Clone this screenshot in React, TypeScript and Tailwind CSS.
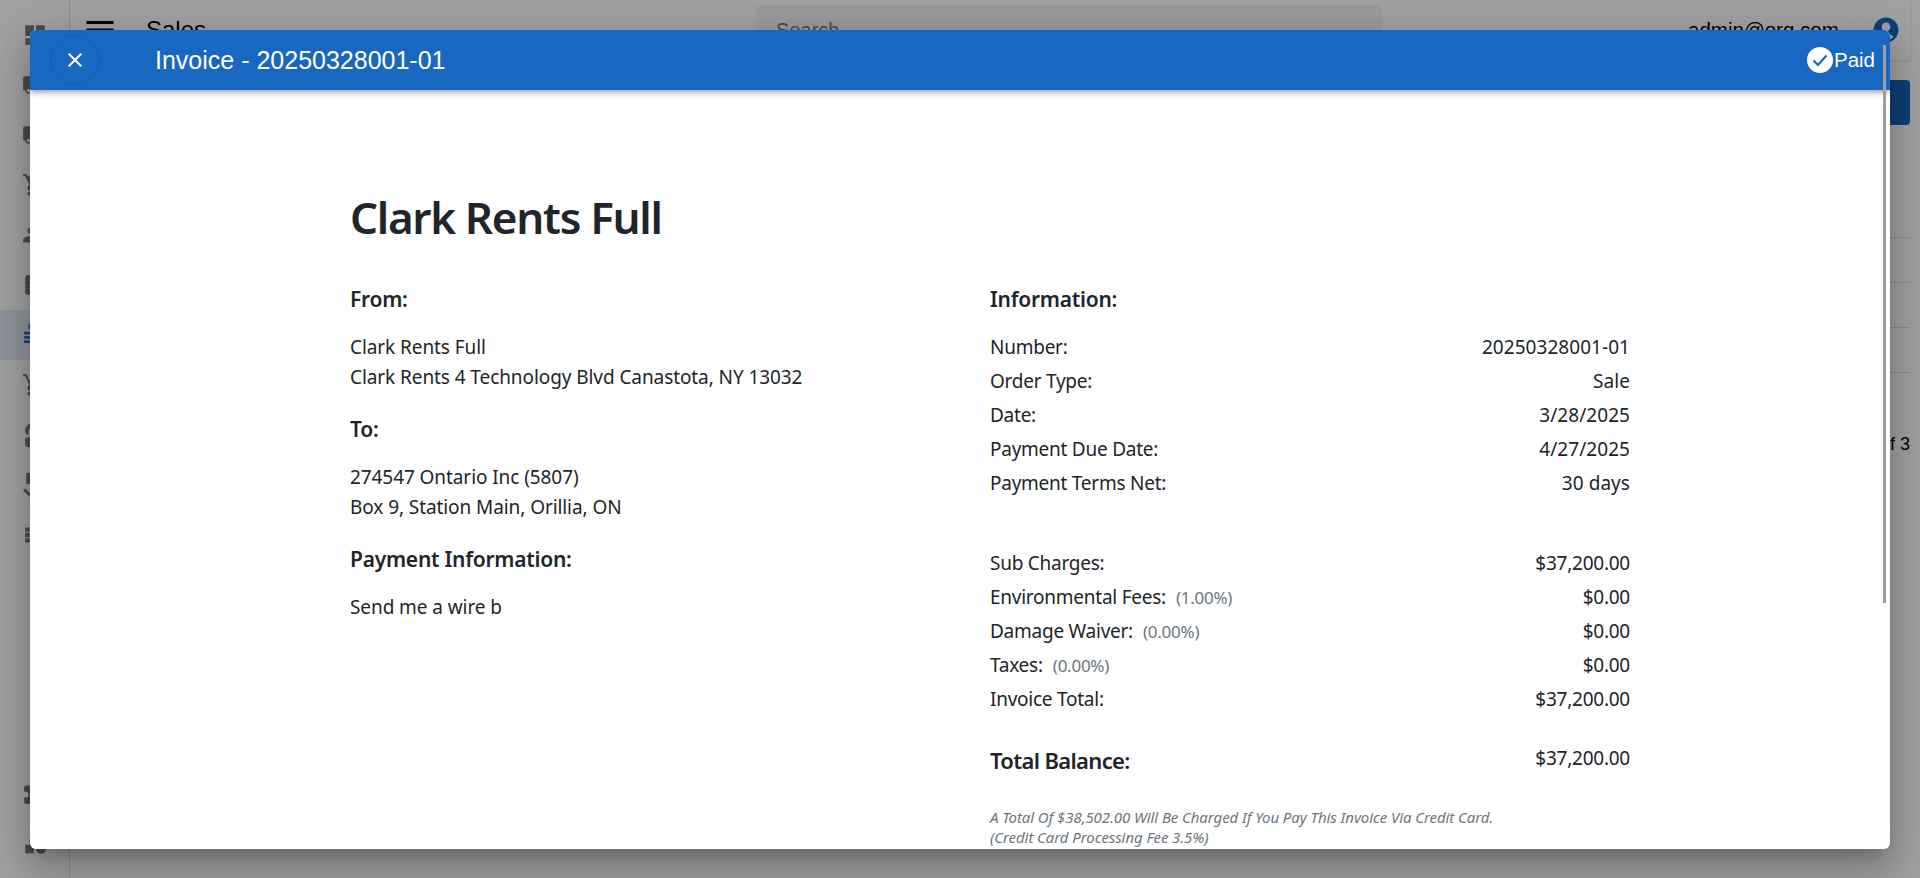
import {
  MdDashboard,
  MdLocalShipping,
  MdShoppingCart,
  MdGroup,
  MdAssignment,
  MdAddShoppingCart,
  MdViewList,
  MdExtension,
  MdCategory,
  MdAccountCircle,
  MdMenu,
  MdClose,
} from 'react-icons/md'

function OrdersIcon({ size }: { size: number }) {
  return (
    <svg viewBox="0 0 24 24" width={size} height={size} fill="currentColor">
      <rect x="6" y="1" width="12" height="6" rx="2" />
      <rect x="2" y="9" width="20" height="2.4" />
      <rect x="2" y="13" width="20" height="2.4" />
      <rect x="2" y="17" width="20" height="2.4" />
    </svg>
  )
}

function RingBoxIcon({ size }: { size: number }) {
  return (
    <svg viewBox="0 0 24 24" width={size} height={size} fill="currentColor">
      <path d="M12 1c-5 0-9 2.5-9 6s1 5 3 5.500V9c0-2 3-4 6-4s6 2 6 4v3.500c2-.5 3-2 3-5.500s-4-6-9-6z" />
      <rect x="3" y="14" width="18" height="9" rx="2" />
    </svg>
  )
}

function TaskIcon({ size }: { size: number }) {
  return (
    <svg viewBox="0 0 24 24" width={size} height={size}>
      <path fill="currentColor" fillRule="evenodd" d="M4 1h16v10H4zM9 4v4h2V4z" />
      <path fill="none" stroke="currentColor" strokeWidth="2.6" d="M2 16l5 5 8-8" />
    </svg>
  )
}

const sideTop = [
  { id: 'dash', icon: MdDashboard },
  { id: 'ship1', icon: MdLocalShipping },
  { id: 'ship2', icon: MdLocalShipping },
  { id: 'cart1', icon: MdShoppingCart },
  { id: 'group', icon: MdGroup },
  { id: 'assign', icon: MdAssignment },
  { id: 'sales', icon: OrdersIcon, active: true },
  { id: 'cart2', icon: MdAddShoppingCart },
  { id: 'ring', icon: RingBoxIcon },
  { id: 'task', icon: TaskIcon },
  { id: 'list', icon: MdViewList },
]

const information = [
  ['Number:', '20250328001-01'],
  ['Order Type:', 'Sale'],
  ['Date:', '3/28/2025'],
  ['Payment Due Date:', '4/27/2025'],
  ['Payment Terms Net:', '30 days'],
]

const charges = [
  { label: 'Sub Charges:', value: '$37,200.00' },
  { label: 'Environmental Fees:', pct: '(1.00%)', value: '$0.00' },
  { label: 'Damage Waiver:', pct: '(0.00%)', value: '$0.00' },
  { label: 'Taxes:', pct: '(0.00%)', value: '$0.00' },
  { label: 'Invoice Total:', value: '$37,200.00' },
]

function Background() {
  return (
    <div className="flex h-[878px] w-[1920px] bg-white font-['Liberation_Sans',sans-serif] text-black">
      <aside className="flex w-[70px] shrink-0 flex-col justify-between border-r border-[#e0e0e0] py-[10px]">
        <div>
          {sideTop.map((item) => (
            <div
              key={item.id}
              className={`flex h-[50px] items-center justify-center ${item.active ? 'bg-[#e3ecf5] text-[#1565c0]' : 'text-[#757575]'}`}
            >
              <item.icon size={26} />
            </div>
          ))}
        </div>
        <div>
          <div className="flex h-[50px] items-center justify-center text-[#757575]">
            <MdExtension size={26} />
          </div>
          <div className="flex h-[50px] items-center justify-center text-[#757575]">
            <MdCategory size={26} />
          </div>
        </div>
      </aside>
      <div className="flex min-w-0 flex-1 flex-col pr-[10px]">
        <header className="flex h-[60px] items-center pl-[12px] shadow-[0_1px_3px_rgba(0,0,0,0.12)]">
          <MdMenu size={36} />
          <span className="ml-[28px] text-[24px]">Sales</span>
          <div className="ml-[550px] flex h-[50px] w-[626px] items-center rounded-[6px] bg-[#f5f5f5] px-[20px] text-[20px] text-[#757575]">
            Search
          </div>
          <span className="ml-[306px] text-[20.500px]">admin@org.com</span>
          <MdAccountCircle size={30} className="ml-[32px] text-[#1565c0]" />
        </header>
        <div className="mt-[20px] flex justify-end">
          <div className="h-[45px] w-[120px] rounded-[4px] bg-[#1a62bc]" />
        </div>
        <div className="mt-[68px] flex flex-col">
          <div className="h-[45px] border-b border-[#e0e0e0]" />
          <div className="h-[45px] border-b border-[#e0e0e0]" />
          <div className="h-[45px] border-b border-[#e0e0e0]" />
          <div className="h-[45px] border-b border-[#e0e0e0]" />
        </div>
        <div className="mt-[58px] text-right text-[18px]">1 of 3</div>
      </div>
    </div>
  )
}

function InvoiceBody() {
  return (
    <div className="ml-[320px] w-[1280px] pt-[99px] font-['Noto_Sans',sans-serif] text-[#212529]">
      <h1 className="h-[70px] text-[44px] leading-[56px] font-semibold tracking-[-1.3px]">Clark Rents Full</h1>
      <div className="mt-[26px] grid grid-cols-2">
        <div>
          <h3 className="h-[28px] text-[21px] leading-[28px] font-semibold tracking-[-0.25px]">From:</h3>
          <div className="mt-[19px] text-[19px] leading-[30px] tracking-[-0.08px]">
            <p>Clark Rents Full</p>
            <p>Clark Rents 4 Technology Blvd Canastota, NY 13032</p>
          </div>
          <h3 className="mt-[23px] h-[28px] text-[21px] leading-[28px] font-semibold tracking-[-0.25px]">To:</h3>
          <div className="mt-[19px] text-[19px] leading-[30px] tracking-[-0.08px]">
            <p>274547 Ontario Inc (5807)</p>
            <p>Box 9, Station Main, Orillia, ON</p>
          </div>
          <h3 className="mt-[23px] h-[28px] text-[21px] leading-[28px] font-semibold tracking-[-0.25px]">Payment Information:</h3>
          <div className="mt-[19px] text-[19px] leading-[30px] tracking-[-0.08px]">
            <p>Send me a wire b</p>
          </div>
        </div>
        <div>
          <h3 className="h-[28px] text-[21px] leading-[28px] font-semibold tracking-[-0.25px]">Information:</h3>
          <div className="mt-[17px]">
            {information.map(([label, value]) => (
              <div key={label} className="flex h-[34px] items-center justify-between text-[19px] tracking-[-0.25px]">
                <span>{label}</span>
                <span className="tracking-[0.05px]">{value}</span>
              </div>
            ))}
          </div>
          <div className="mt-[46px]">
            {charges.map((row) => (
              <div key={row.label} className="flex h-[34px] items-center justify-between text-[19px] tracking-[-0.25px]">
                <span>
                  {row.label}
                  {row.pct && <small className="ml-[10px] text-[17px] text-[#6c757d]">{row.pct}</small>}
                </span>
                <span>{row.value}</span>
              </div>
            ))}
          </div>
          <div className="mt-[28px] flex justify-between">
            <span className="text-[22px] leading-[32px] font-semibold tracking-[-0.65px]">Total Balance:</span>
            <span className="text-[19px] leading-[28px] tracking-[-0.25px]">$37,200.00</span>
          </div>
          <p className="mt-[31px] text-[15px] leading-[20px] tracking-[-0.08px] text-[#6c757d] italic">
            A Total Of $38,502.00 Will Be Charged If You Pay This Invoice Via Credit Card.
            <br />
            (Credit Card Processing Fee 3.5%)
          </p>
        </div>
      </div>
    </div>
  )
}

export default function App() {
  return (
    <div className="relative h-[878px] w-[1920px] overflow-hidden">
      <Background />
      {/* backdrop + dialog */}
      <div className="absolute inset-0 flex items-start justify-center bg-black/[0.37] pt-[30px]">
        <div className="relative h-[819px] w-[1860px] overflow-hidden rounded-[6px] bg-white shadow-[0_11px_15px_-7px_rgba(0,0,0,0.2),0_24px_38px_3px_rgba(0,0,0,0.14),0_9px_46px_8px_rgba(0,0,0,0.12)]">
          <div className="relative z-10 flex h-[60px] items-center bg-[#1867c0] pr-[15px] pl-[20px] font-['Liberation_Sans',sans-serif] text-white shadow-[0_2px_4px_-1px_rgba(0,0,0,0.2),0_4px_5px_0_rgba(0,0,0,0.14),0_1px_10px_0_rgba(0,0,0,0.12)]">
            <button className="flex h-[50px] w-[50px] items-center justify-center rounded-full border border-[#1a5dab]">
              <MdClose size={24} />
            </button>
            <div className="ml-[55px] flex-1 pt-[1px] text-[25px]">Invoice - 20250328001-01</div>
            <svg viewBox="0 0 26 26" className="h-[26px] w-[26px]">
              <circle cx="13" cy="13" r="13" fill="#fff" />
              <path d="M6.500 13.500l4.500 4.500 8.500-9.500" fill="none" stroke="#1867c0" strokeWidth="2.200" />
            </svg>
            <span className="ml-[1px] text-[20.500px]">Paid</span>
          </div>
          <InvoiceBody />
          {/* scrollbar thumb */}
          <div className="absolute top-[15px] right-[4px] z-20 h-[558px] w-[3px] bg-[#9e9e9e]" />
        </div>
      </div>
    </div>
  )
}
